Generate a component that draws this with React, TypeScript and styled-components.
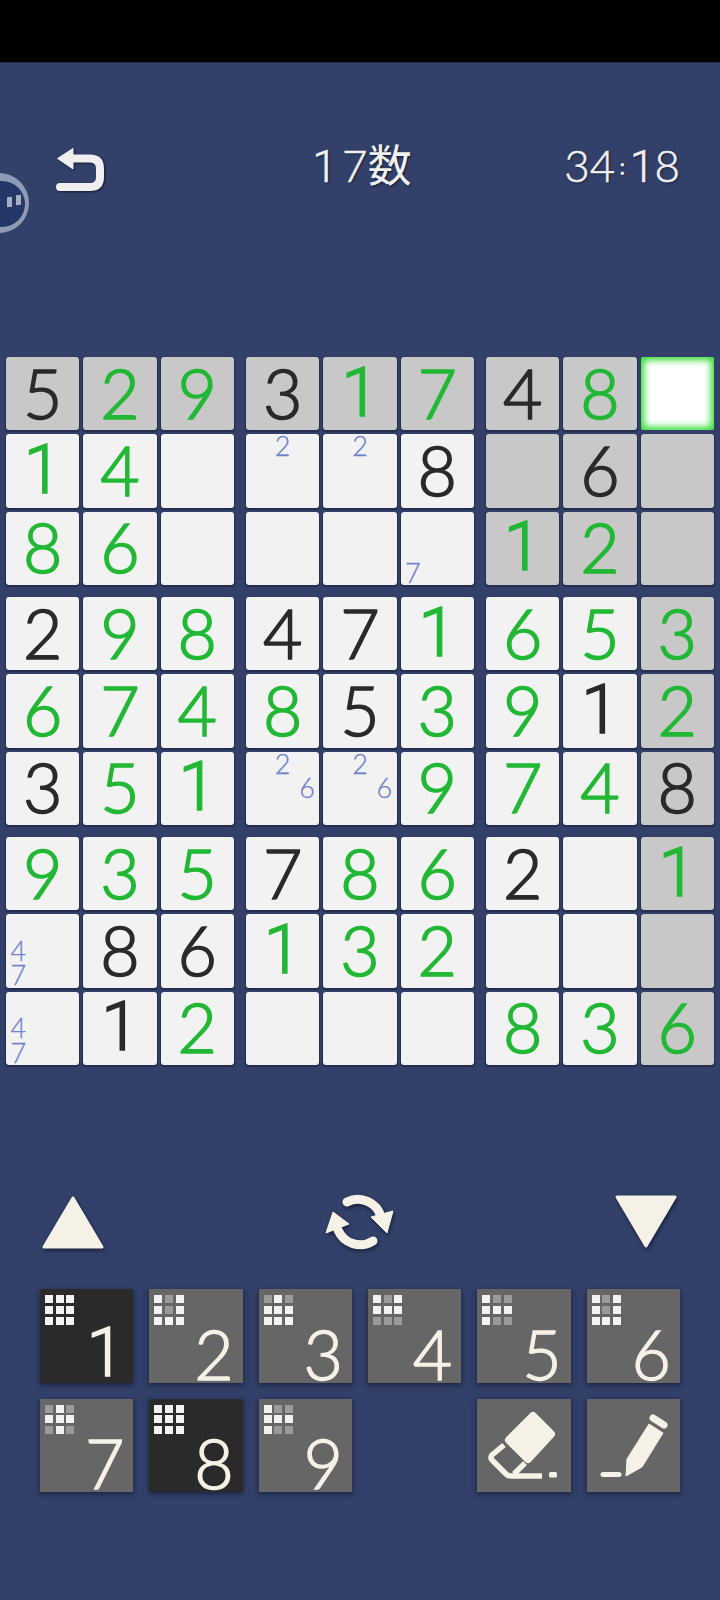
import React from "react";
import styled, { createGlobalStyle, css } from "styled-components";

const Global = createGlobalStyle`
  html, body { margin: 0; padding: 0; background: #33416a; }
  #root { width: 720px; height: 1600px; }
`;

const DIGIT_FONT = `Lato, "Noto Sans CJK JP", sans-serif`;

const oneFace = css<{ $one?: boolean }>`
  font-family: ${(p) => (p.$one ? `Roboto, sans-serif` : DIGIT_FONT)};
`;

const Page = styled.div`
  position: relative;
  width: 720px;
  height: 1600px;
  overflow: hidden;
  background: #33416a;
  font-family: ${DIGIT_FONT};
`;

const StatusBar = styled.div`
  height: 63px;
  background: #000;
  border-bottom: 1px solid #252f4e;
  box-sizing: border-box;
`;

const Bubble = styled.div`
  position: absolute;
  left: -31px;
  top: 173px;
  width: 60px;
  height: 60px;
  border-radius: 50%;
  background: #8f9ab6;
  overflow: hidden;
`;

const BubbleCore = styled.div`
  position: absolute;
  left: 10px;
  top: 8px;
  width: 46px;
  height: 46px;
  border-radius: 50%;
  background: #243768;
`;

const BubbleEye = styled.span<{ $left: number; $top: number }>`
  position: absolute;
  left: ${(p) => p.$left}px;
  top: ${(p) => p.$top}px;
  width: 5px;
  height: 10px;
  background: #a5aec6;
  transform: skewY(-8deg);
`;

const Header = styled.header`
  display: grid;
  grid-template-columns: 1fr auto 1fr;
  align-items: center;
  height: 43px;
  padding: 85px 40px 166px 57px;
`;

const BackIcon = styled.svg`
  display: block;
  width: 47px;
  height: 43px;
  overflow: visible;
  filter: drop-shadow(1px 1px 1px rgba(10, 15, 35, 0.8));
`;

const headerText = css`
  color: #f0f0f0;
  line-height: 35px;
  padding-bottom: 6px;
  white-space: nowrap;
  text-shadow: 1px 1px 2px rgba(10, 15, 35, 0.85);
`;

const Title = styled.div`
  ${headerText}
  margin-right: 13px;
  font-size: 44px;
  font-weight: 300;
  -webkit-text-stroke: 0.6px #f0f0f0;
`;

const TitleOne = styled.span`
  font-family: Roboto, sans-serif;
  letter-spacing: 5.3px;
`;

const TitleKanji = styled.span`
  font-size: 44px;
  font-weight: 400;
  -webkit-text-stroke: 0;
`;

const Timer = styled.div`
  ${headerText}
  justify-self: end;
  font-size: 44px;
  font-weight: 300;
  -webkit-text-stroke: 0.6px #f0f0f0;
`;

const TimerColon = styled.span`
  margin: 0 5px 0 4px;
  font-size: 22px;
  font-weight: 700;
  vertical-align: 7px;
  -webkit-text-stroke: 0;
`;

const TimerOne = styled.span`
  font-family: Roboto, sans-serif;
`;

const Board = styled.div`
  display: grid;
  grid-template-columns: repeat(3, 228px);
  gap: 12px;
  margin-left: 6px;
  width: 708px;
`;

const Box = styled.div`
  display: grid;
  grid-template-columns: repeat(3, 73.333px);
  grid-auto-rows: 73.333px;
  gap: 4px;
`;

const Cell = styled.div<{ $shade: "light" | "gray" | "selected" }>`
  display: flex;
  align-items: center;
  justify-content: center;
  border-radius: 3px;
  background: ${(p) =>
    p.$shade === "gray" ? "#c8c8c8" : p.$shade === "selected" ? "#ffffff" : "#f2f2f2"};
  box-shadow: ${(p) =>
    p.$shade === "selected"
      ? "inset 0 0 7px 3px #2fdc2f"
      : "0 1px 1px 1px rgba(25, 30, 55, 0.55)"};
`;

const Digit = styled.span<{ $given: boolean; $one?: boolean }>`
  ${oneFace}
  --ink: ${(p) => (p.$given ? "#2a2a2a" : "#22b835")};
  color: var(--ink);
  font-size: 68px;
  font-weight: 300;
  line-height: 1;
  padding-bottom: 2px;
  -webkit-text-stroke: 1.6px var(--ink);
`;

const Notes = styled.div`
  display: grid;
  grid-template-columns: repeat(3, 1fr);
  grid-template-rows: repeat(3, 1fr);
  width: 100%;
  height: 100%;
`;

const Note = styled.span`
  display: flex;
  align-items: center;
  justify-content: center;
  color: #6f82cb;
  font-size: 27px;
  font-weight: 300;
  line-height: 24px;
  height: 24px;
  -webkit-text-stroke: 0.3px #6f82cb;
`;

const ArrowRow = styled.div`
  display: flex;
  align-items: center;
  justify-content: space-between;
  height: 56px;
  margin-top: 129px;
  padding: 0 43px 0 42px;
`;

const ShapeIcon = styled.svg`
  display: block;
  overflow: visible;
  filter: drop-shadow(1px 2px 2px rgba(10, 15, 35, 0.7));
`;

const Palette = styled.div`
  display: grid;
  grid-template-columns: repeat(6, 93.333px);
  grid-auto-rows: 93.333px;
  gap: 16px;
  margin: 39.33px 0 0 40px;
`;

const PadButton = styled.div<{ $active?: boolean; $column?: number }>`
  position: relative;
  display: flex;
  flex-direction: column;
  box-sizing: border-box;
  padding: 6px 9px 5px 5px;
  background: ${(p) => (p.$active ? "#2a2a2a" : "#666666")};
  box-shadow: 0 2px 5px 1px rgba(15, 20, 45, 0.55);
  border-radius: ${(p) => (p.$active ? "3px" : "0")};
  ${(p) => (p.$column ? `grid-column: ${p.$column};` : "")}
`;

const Mini = styled.div`
  display: grid;
  grid-template-columns: repeat(3, 8px);
  grid-auto-rows: 8px;
  gap: 2.67px;
`;

const MiniDot = styled.span<{ $on: boolean }>`
  background: ${(p) => (p.$on ? "#f2f2f2" : "#9a9a9a")};
`;

const PadDigit = styled.span<{ $one?: boolean }>`
  ${oneFace}
  align-self: flex-end;
  margin-top: auto;
  color: #f5f1e6;
  font-size: 68px;
  font-weight: 300;
  line-height: 49px;
  -webkit-text-stroke: 1.4px #f5f1e6;
`;

const ToolIcon = styled.svg`
  display: block;
  width: 93.333px;
  height: 93.333px;
`;

const ToolButton = styled(PadButton)`
  padding: 0;
`;

type Entry = string;
// "5b" given (dark), "2g" entered (green), "" empty, "n26" pencil notes
const ROWS: Entry[][] = [
  ["5b", "2g", "9g", "3b", "1g", "7g", "4b", "8g", ""],
  ["1g", "4g", "", "n2", "n2", "8b", "", "6b", ""],
  ["8g", "6g", "", "", "", "n7", "1g", "2g", ""],
  ["2b", "9g", "8g", "4b", "7b", "1g", "6g", "5g", "3g"],
  ["6g", "7g", "4g", "8g", "5b", "3g", "9g", "1b", "2g"],
  ["3b", "5g", "1g", "n26", "n26", "9g", "7g", "4g", "8b"],
  ["9g", "3g", "5g", "7b", "8g", "6g", "2b", "", "1g"],
  ["n47", "8b", "6b", "1g", "3g", "2g", "", "", ""],
  ["n47", "1b", "2g", "", "", "", "8g", "3g", "6g"],
];

const shadeOf = (r: number, c: number): "light" | "gray" | "selected" => {
  if (r === 0 && c === 8) return "selected";
  if (r === 0 || c === 8 || (r < 3 && c >= 6)) return "gray";
  return "light";
};

const PAD: { n: number; mask: string; active?: boolean }[] = [
  { n: 1, mask: "111111111", active: true },
  { n: 2, mask: "101101111" },
  { n: 3, mask: "010111111" },
  { n: 4, mask: "101111000" },
  { n: 5, mask: "100111100" },
  { n: 6, mask: "101101111" },
  { n: 7, mask: "010111010" },
  { n: 8, mask: "111111111", active: true },
  { n: 9, mask: "100111100" },
];

const BoardCell = ({ entry, r, c }: { entry: Entry; r: number; c: number }) => {
  const shade = shadeOf(r, c);
  if (entry.startsWith("n")) {
    return (
      <Cell $shade={shade}>
        <Notes>
          {[1, 2, 3, 4, 5, 6, 7, 8, 9].map((d) => (
            <Note key={d}>{entry.includes(String(d)) ? d : ""}</Note>
          ))}
        </Notes>
      </Cell>
    );
  }
  return (
    <Cell $shade={shade}>
      {entry && (
        <Digit $given={entry[1] === "b"} $one={entry[0] === "1"}>
          {entry[0]}
        </Digit>
      )}
    </Cell>
  );
};

const INK = "#f5f1e6";

export default function App() {
  const boxes = [0, 3, 6].flatMap((r0) => [0, 3, 6].map((c0) => [r0, c0]));
  return (
    <Page>
      <Global />
      <StatusBar />
      <Bubble>
        <BubbleCore />
        <BubbleEye $left={38} $top={24} />
        <BubbleEye $left={47} $top={22} />
      </Bubble>
      <Header>
        <BackIcon viewBox="57 148 47 43">
          <path
            d="M70 158.5 H90 Q100 158.5 100 168.5 V177 Q100 187 90 187 H60"
            fill="none"
            stroke="#efefef"
            strokeWidth="8"
            strokeLinecap="round"
          />
          <path d="M57.5 158.5 L73 148.5 V169 Z" fill="#efefef" stroke="#efefef" strokeLinejoin="round" />
        </BackIcon>
        <Title>
          <TitleOne>1</TitleOne>7<TitleKanji>数</TitleKanji>
        </Title>
        <Timer>
          34<TimerColon>:</TimerColon>
          <TimerOne>1</TimerOne>8
        </Timer>
      </Header>
      <Board>
        {boxes.map(([r0, c0]) => (
          <Box key={`${r0}-${c0}`}>
            {[0, 1, 2].flatMap((dr) =>
              [0, 1, 2].map((dc) => (
                <BoardCell key={`${dr}${dc}`} entry={ROWS[r0 + dr][c0 + dc]} r={r0 + dr} c={c0 + dc} />
              ))
            )}
          </Box>
        ))}
      </Board>
      <ArrowRow>
        <ShapeIcon width="62" height="56" viewBox="0 0 62 56">
          <path d="M31 4 L60 53 H2 Z" fill={INK} stroke={INK} strokeWidth="3" strokeLinejoin="round" />
        </ShapeIcon>
        <ShapeIcon width="67" height="56" viewBox="16 14 67 56">
          <path d="M37 22 A24 24 0 0 1 71 37" fill="none" stroke={INK} strokeWidth="9" strokeLinecap="round" />
          <path d="M61 37 L83 31 L77 53 Z" fill={INK} stroke={INK} strokeWidth="1" strokeLinejoin="round" />
          <path d="M63 61 A24 24 0 0 1 28 50" fill="none" stroke={INK} strokeWidth="9" strokeLinecap="round" />
          <path d="M16 53 L23 32 L39 44 Z" fill={INK} stroke={INK} strokeWidth="1" strokeLinejoin="round" />
        </ShapeIcon>
        <ShapeIcon width="62" height="56" viewBox="0 0 62 56">
          <path d="M31 52 L60 3 H2 Z" fill={INK} stroke={INK} strokeWidth="3" strokeLinejoin="round" />
        </ShapeIcon>
      </ArrowRow>
      <Palette>
        {PAD.map((b) => (
          <PadButton key={b.n} $active={b.active}>
            <Mini>
              {b.mask.split("").map((m, i) => (
                <MiniDot key={i} $on={m === "1"} />
              ))}
            </Mini>
            <PadDigit $one={b.n === 1}>{b.n}</PadDigit>
          </PadButton>
        ))}
        <ToolButton $column={5}>
          <ToolIcon viewBox="0 0 93.33 93.33">
            <path d="M56 17 L74 35 L51 60 L32 41 Z" fill={INK} stroke={INK} strokeWidth="8" strokeLinejoin="round" />
            <path
              d="M27 46 L15 56 Q13 59 15 61 L29 75 Q31 77 34 77 H65"
              fill="none"
              stroke={INK}
              strokeWidth="5.5"
            />
            <path d="M48 64 L37 75" fill="none" stroke={INK} strokeWidth="5.5" />
            <rect x="72" y="73" width="8" height="5.5" rx="1.5" fill={INK} />
          </ToolIcon>
        </ToolButton>
        <ToolButton>
          <ToolIcon viewBox="0 0 93.33 93.33">
            <path d="M66 19 L77 26" fill="none" stroke={INK} strokeWidth="7" strokeLinecap="round" />
            <path d="M62 25 L76 34 L55 68 L39 77 L40 60 Z" fill={INK} stroke={INK} strokeWidth="1" strokeLinejoin="round" />
            <path d="M16 75.5 H32" fill="none" stroke={INK} strokeWidth="5" strokeLinecap="round" />
          </ToolIcon>
        </ToolButton>
      </Palette>
    </Page>
  );
}
